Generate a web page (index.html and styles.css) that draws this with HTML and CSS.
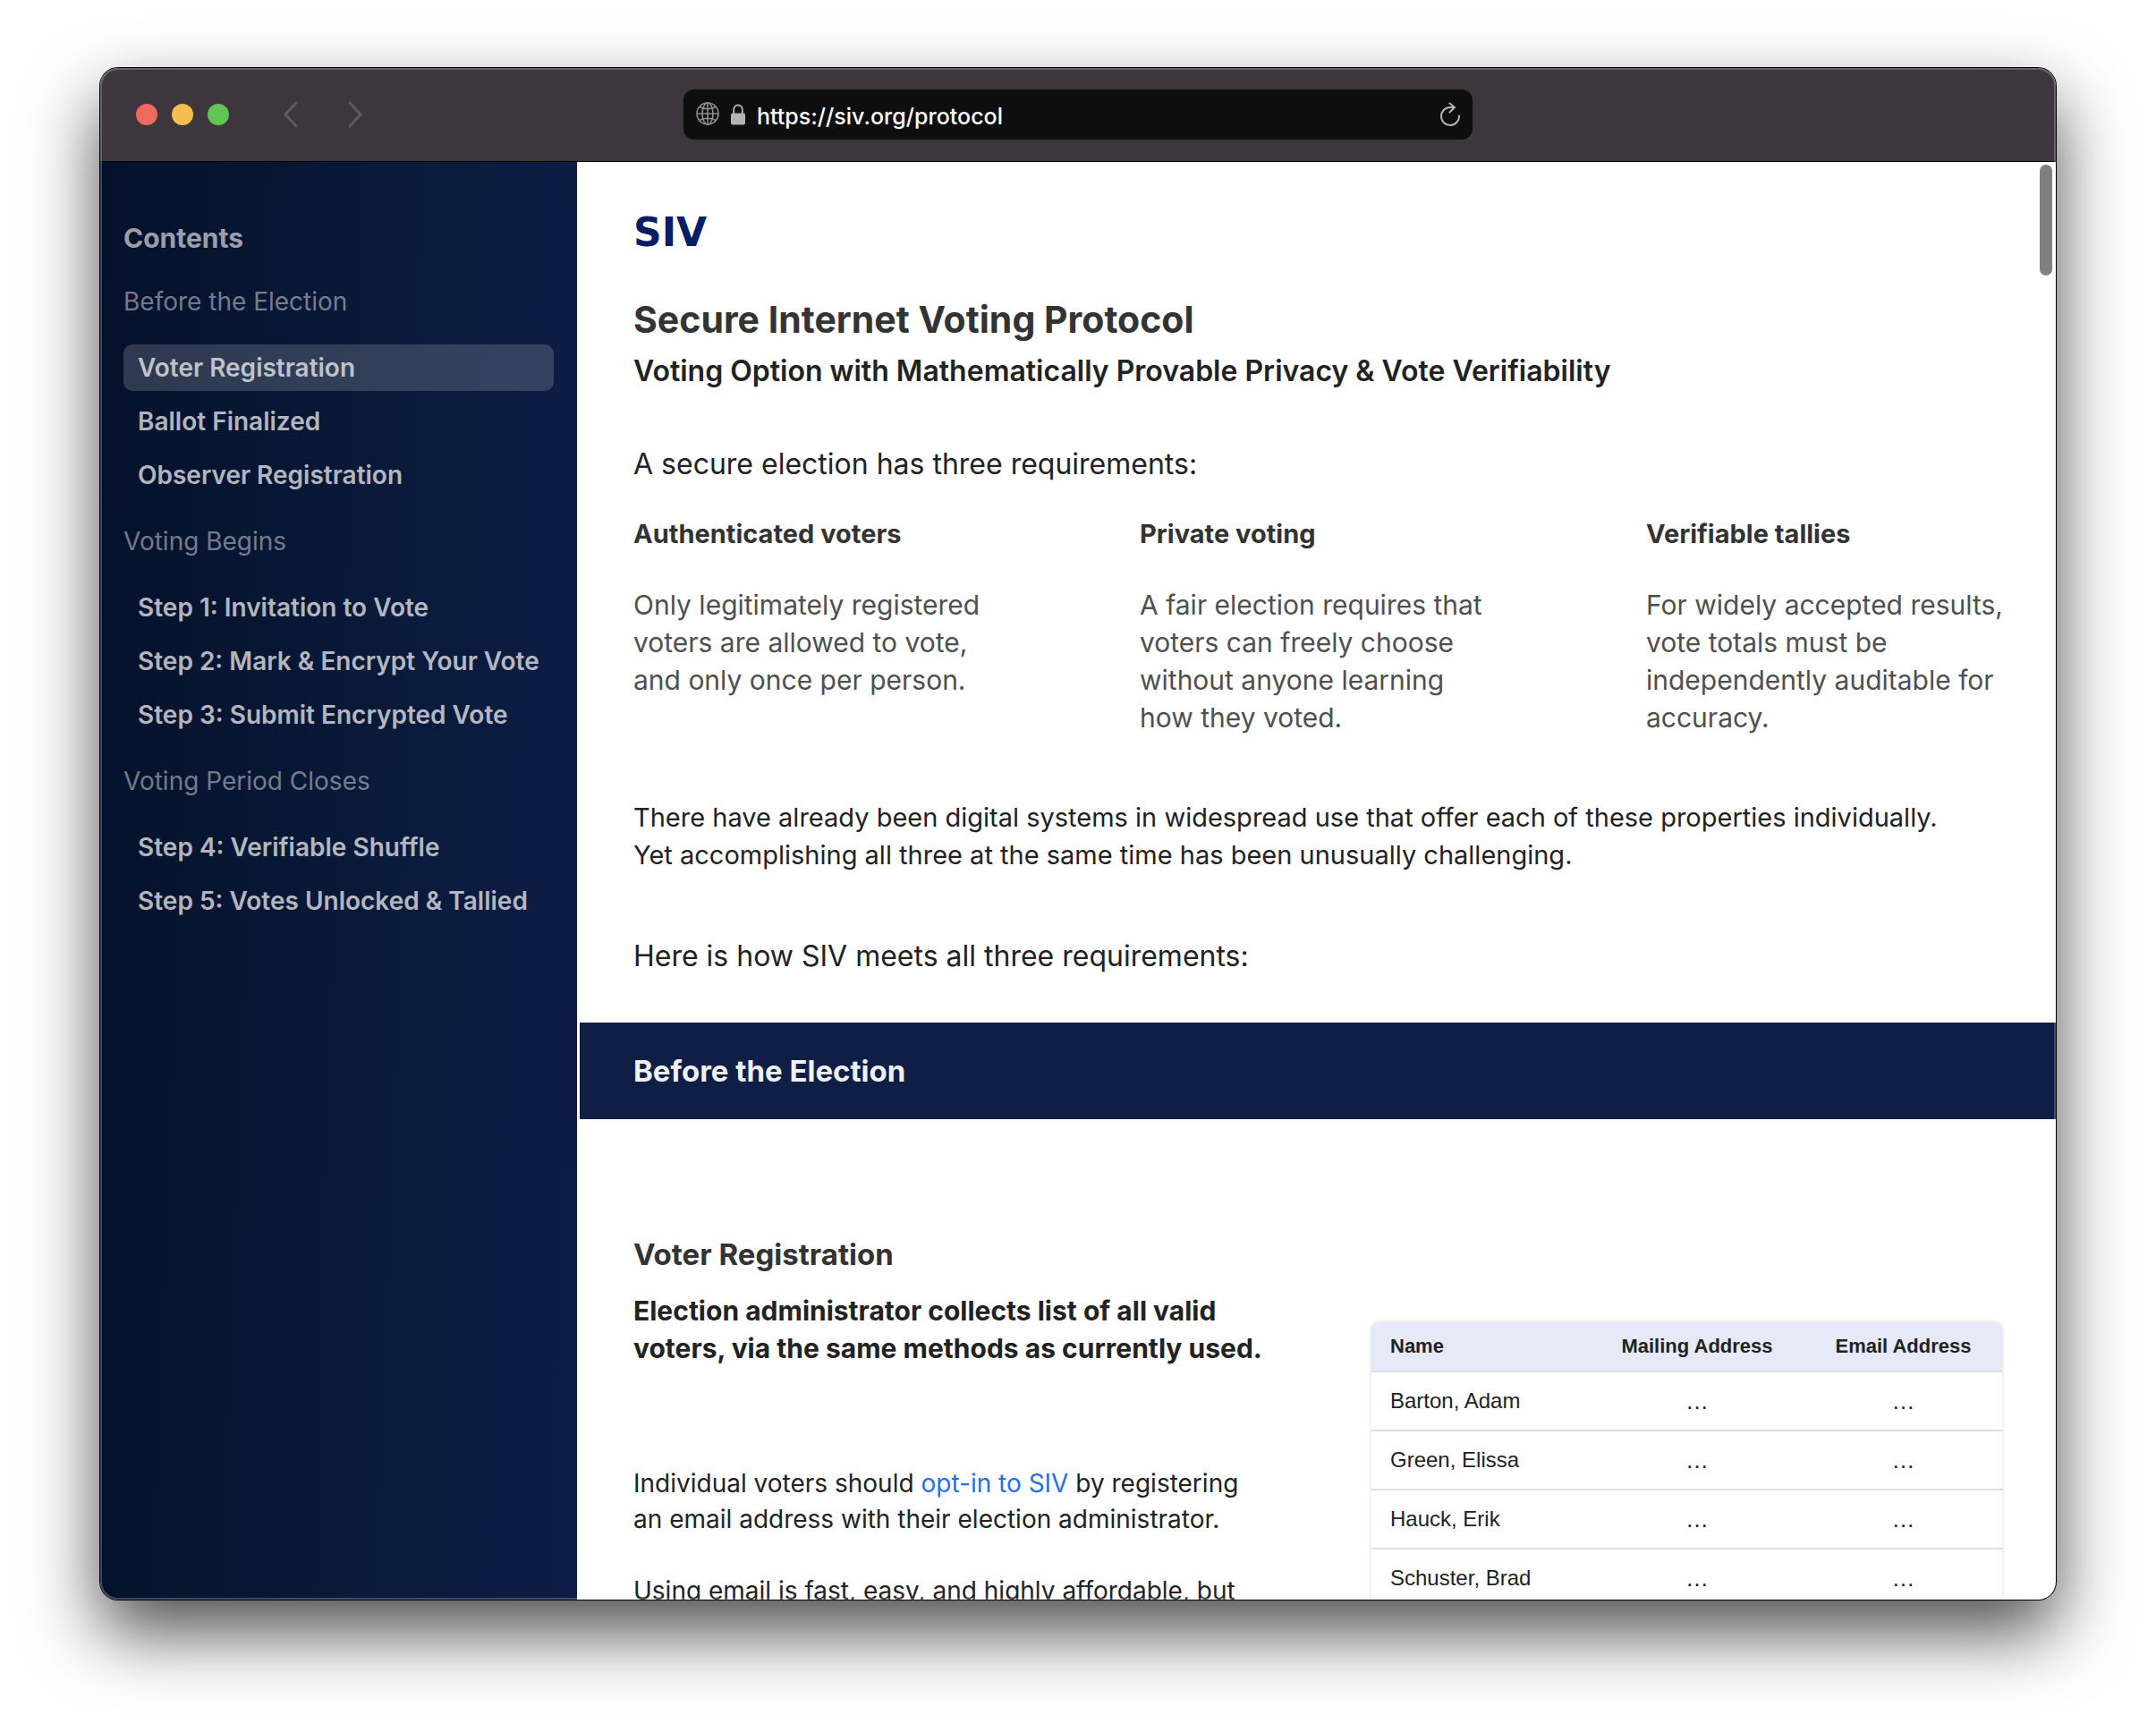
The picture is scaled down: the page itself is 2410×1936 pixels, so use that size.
FILE: index.html
```html
<!DOCTYPE html>
<html lang="en">
<head>
<meta charset="utf-8">
<title>SIV Protocol</title>
<link rel="stylesheet" href="styles.css">
</head>
<body>
<div class="window">
  <header class="titlebar">
    <div class="controls">
      <div class="lights">
        <button class="light close" aria-label="Close"></button>
        <button class="light minimize" aria-label="Minimize"></button>
        <button class="light zoom" aria-label="Zoom"></button>
      </div>
      <div class="history">
        <button class="icon-button" aria-label="Back">
          <svg width="16" height="30" viewBox="0 0 16 30" fill="none" stroke="currentColor" stroke-width="3" stroke-linecap="round" stroke-linejoin="round"><path d="M14 2 2 15l12 13"/></svg>
        </button>
        <button class="icon-button" aria-label="Forward">
          <svg width="16" height="30" viewBox="0 0 16 30" fill="none" stroke="currentColor" stroke-width="3" stroke-linecap="round" stroke-linejoin="round"><path d="M2 2l12 13L2 28"/></svg>
        </button>
      </div>
    </div>
    <div class="address">
      <svg class="globe" width="26" height="28" viewBox="0 0 26 28" fill="none" stroke="currentColor" stroke-width="1.6"><circle cx="13" cy="13" r="12"/><ellipse cx="13" cy="13" rx="6" ry="12"/><path d="M13 1v24M1 13h24M4 5.5c5 3 13 3 18 0M4 20.500c5-3 13-3 18 0"/></svg>
      <svg class="lock" width="18" height="24" viewBox="0 0 18 24"><rect x="1" y="10.500" width="16" height="13" rx="2" fill="currentColor"/><path d="M4.200 11V6.500a4.800 5 0 0 1 9.600 0V11" fill="none" stroke="currentColor" stroke-width="1.900"/></svg>
      <input class="url" type="text" aria-label="Address" value="https://siv.org/protocol" readonly>
      <button class="icon-button reload" aria-label="Reload">
        <svg width="22" height="28" viewBox="0 0 22 28" fill="none" stroke="currentColor" stroke-width="2" stroke-linecap="round" stroke-linejoin="round"><path d="M21 15.500A10 10 0 1 1 11 6h4.500M10.500 1.500 16 6l-5.500 5.500"/></svg>
      </button>
    </div>
  </header>

  <div class="viewport">
    <nav class="sidebar" aria-label="Contents">
      <h2 class="sidebar-title">Contents</h2>
      <h3 class="group-title">Before the Election</h3>
      <ul class="group">
        <li><a class="item active" href="#voter-registration">Voter Registration</a></li>
        <li><a class="item" href="#ballot-finalized">Ballot Finalized</a></li>
        <li><a class="item" href="#observer-registration">Observer Registration</a></li>
      </ul>
      <h3 class="group-title">Voting Begins</h3>
      <ul class="group">
        <li><a class="item" href="#step-1">Step 1: Invitation to Vote</a></li>
        <li><a class="item" href="#step-2">Step 2: Mark &amp; Encrypt Your Vote</a></li>
        <li><a class="item" href="#step-3">Step 3: Submit Encrypted Vote</a></li>
      </ul>
      <h3 class="group-title">Voting Period Closes</h3>
      <ul class="group">
        <li><a class="item" href="#step-4">Step 4: Verifiable Shuffle</a></li>
        <li><a class="item" href="#step-5">Step 5: Votes Unlocked &amp; Tallied</a></li>
      </ul>
    </nav>

    <main class="page">
      <div class="intro">
        <a class="logo" href="#">SIV</a>
        <h1 class="title">Secure Internet Voting Protocol</h1>
        <p class="subtitle">Voting Option with Mathematically Provable Privacy &amp; Vote Verifiability</p>
        <p class="lead">A secure election has three requirements:</p>
        <div class="requirements">
          <section>
            <h4 class="req-title">Authenticated voters</h4>
            <p class="req-text">Only legitimately registered<br>voters are allowed to vote,<br>and only once per person.</p>
          </section>
          <section>
            <h4 class="req-title">Private voting</h4>
            <p class="req-text">A fair election requires that<br>voters can freely choose<br>without anyone learning<br>how they voted.</p>
          </section>
          <section>
            <h4 class="req-title">Verifiable tallies</h4>
            <p class="req-text">For widely accepted results,<br>vote totals must be<br>independently auditable for<br>accuracy.</p>
          </section>
        </div>
        <p class="context">There have already been digital systems in widespread use that offer each of these properties individually.<br>Yet accomplishing all three at the same time has been unusually challenging.</p>
        <p class="lead how">Here is how SIV meets all three requirements:</p>
      </div>

      <h2 class="banner">Before the Election</h2>

      <section class="step" id="voter-registration">
        <div class="step-text">
          <h3 class="step-title">Voter Registration</h3>
          <p class="step-summary">Election administrator collects list of all valid voters, via the same methods as currently used.</p>
          <div class="step-body">
            <p>Individual voters should <a class="link" href="#opt-in">opt-in to SIV</a> by registering<br>an email address with their election administrator.</p>
            <p>Using email is fast, easy, and highly affordable, but</p>
          </div>
        </div>
        <table class="voters">
          <thead>
            <tr><th class="name">Name</th><th class="mail">Mailing Address</th><th class="email">Email Address</th></tr>
          </thead>
          <tbody>
            <tr><td>Barton, Adam</td><td class="dots">…</td><td class="dots">…</td></tr>
            <tr><td>Green, Elissa</td><td class="dots">…</td><td class="dots">…</td></tr>
            <tr><td>Hauck, Erik</td><td class="dots">…</td><td class="dots">…</td></tr>
            <tr><td>Schuster, Brad</td><td class="dots">…</td><td class="dots">…</td></tr>
          </tbody>
        </table>
      </section>
    </main>
    <div class="scroll-thumb"></div>
  </div>
</div>
</body>
</html>
```
FILE: styles.css
```css
* { box-sizing: border-box; }

body {
  margin: 0;
  height: 100vh;
  padding: 76px 112px 148px;
  overflow: hidden;
  background: #fff;
  color: #222;
  font-family: Inter, "Liberation Sans", sans-serif;
}

h1, h2, h3, h4, p, ul { margin: 0; padding: 0; }
ul { list-style: none; }
a { text-decoration: none; }
button { padding: 0; border: 0; background: none; }

/* Window frame */
.window {
  position: relative;
  display: flex;
  flex-direction: column;
  height: 100%;
  overflow: hidden;
  border-radius: 20px;
  background: #fff;
  box-shadow: 0 0 0 1px #000, 0 36px 80px rgba(0, 0, 0, 0.7);
}
.window::after {
  content: "";
  position: absolute;
  inset: 0;
  border-radius: 20px;
  box-shadow: inset 0 0 0 2px rgba(255, 255, 255, 0.22);
  pointer-events: none;
}

.titlebar {
  display: grid;
  grid-template-columns: 1fr minmax(0, 882px) 1fr;
  align-items: center;
  flex: none;
  height: 105px;
  border-bottom: 1px solid #000;
  background: #3d373d;
}
.controls {
  display: flex;
  align-items: center;
  gap: 61px;
  padding-left: 40px;
}
.lights { display: flex; gap: 16px; }
.light { width: 24px; height: 24px; border-radius: 50%; }
.close { background: #ed6a5e; }
.minimize { background: #f5bf4f; }
.zoom { background: #61c554; }
.history { display: flex; gap: 56px; color: #5e595e; }
.icon-button { display: flex; color: inherit; }

.address {
  display: flex;
  align-items: center;
  gap: 12px;
  height: 56px;
  padding: 0 14px;
  border-radius: 12px;
  background: #0e0e0e;
  color: #b4b4b4;
}
.globe { color: #8e8e8e; }
.url {
  flex: 1;
  min-width: 0;
  height: 56px;
  padding: 3px 0 0;
  border: 0;
  outline: 0;
  background: none;
  color: #fff;
  font: 500 25px Inter, "Liberation Sans", sans-serif;
}

.viewport {
  position: relative;
  display: flex;
  flex: 1;
  min-height: 0;
  overflow: hidden;
}
.scroll-thumb {
  position: absolute;
  top: 3px;
  right: 4px;
  width: 14px;
  height: 124px;
  border-radius: 7px;
  background: #808080;
}

/* Table of contents */
.sidebar {
  flex: none;
  width: 533px;
  padding: 60px 26px;
  background: linear-gradient(92deg, #05112b, #0a1a3a 60%, #0d1d47);
}
.sidebar-title {
  margin-bottom: 20px;
  color: rgba(255, 255, 255, 0.6);
  font-size: 30px;
  line-height: 50px;
}
.group-title {
  color: rgba(255, 255, 255, 0.45);
  font-size: 28px;
  font-weight: 400;
  line-height: 52px;
}
.group {
  display: flex;
  flex-direction: column;
  gap: 8px;
  margin: 22px 0;
}
.item {
  display: block;
  padding: 0 16px;
  border-radius: 10px;
  color: rgba(255, 255, 255, 0.7);
  font-size: 28px;
  font-weight: 600;
  line-height: 52px;
  white-space: nowrap;
}
.active { background: rgba(255, 255, 255, 0.17); }

/* Document */
.page {
  flex: 1;
  min-width: 0;
  padding-left: 3px;
}
.intro { padding: 54px 55px 53px 60px; }
.logo {
  display: block;
  color: #071d65;
  font: 700 44px/50px "DejaVu Sans", sans-serif;
}
.title {
  margin-top: 47px;
  color: #333;
  font-size: 41px;
  line-height: 50px;
}
.subtitle {
  margin-top: 12px;
  font-size: 32px;
  font-weight: 600;
  line-height: 42px;
}
.lead {
  margin-top: 62px;
  font-size: 32px;
  line-height: 42px;
}
.requirements {
  display: grid;
  grid-template-columns: repeat(3, 1fr);
  column-gap: 163px;
  margin-top: 36px;
}
.req-title {
  color: #333;
  font-size: 29px;
  font-weight: 700;
  line-height: 42px;
}
.req-text {
  margin-top: 37px;
  color: #4f4f4f;
  font-size: 30px;
  line-height: 42px;
  white-space: nowrap;
}
.context {
  margin-top: 70px;
  font-size: 29px;
  line-height: 42px;
}
.how { margin-top: 71px; }

.banner {
  padding: 0 60px;
  background: #0f1e45;
  color: #f0f0f5;
  font-size: 33px;
  line-height: 108px;
}

.step {
  display: flex;
  align-items: flex-start;
  justify-content: space-between;
  padding: 130px 60px 0;
}
.step-text { width: 718px; }
.step-title {
  color: #333;
  font-size: 33px;
  line-height: 42px;
}
.step-summary {
  margin-top: 21px;
  font-size: 30px;
  font-weight: 700;
  line-height: 42px;
}
.step-body {
  display: flex;
  flex-direction: column;
  gap: 40px;
  margin-top: 110px;
  font-size: 28px;
  line-height: 40px;
}
.link { color: #1f70f0; }

.voters {
  width: 705px;
  margin-top: 97px;
  border-spacing: 0;
  border-radius: 8px;
  box-shadow: 0 0 4px rgba(0, 0, 0, 0.16);
  overflow: hidden;
  table-layout: fixed;
  font: 24px "Liberation Sans", Arial, sans-serif;
}
.voters th, .voters td {
  height: 66px;
  padding: 0;
  border-bottom: 2px solid #dedede;
  text-align: center;
}
.voters th {
  height: 56px;
  background: #e6e9f8;
  font-size: 22px;
}
.voters th:first-child, .voters td:first-child {
  padding-left: 21px;
  text-align: left;
}
.mail { width: 240px; }
.email { width: 221px; }
.voters .dots { font-size: 26px; }
```
